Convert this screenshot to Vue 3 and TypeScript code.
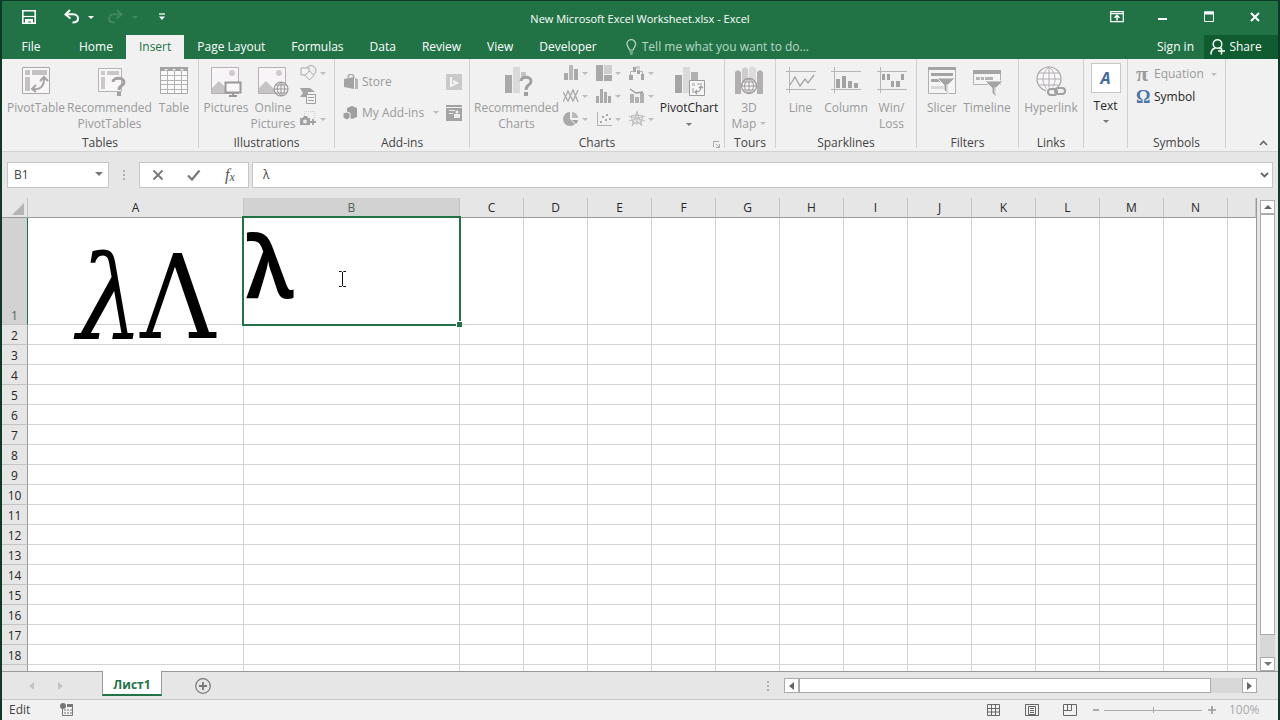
<script setup lang="ts">
import { ref } from 'vue'

const tabs = ['Home', 'Insert', 'Page Layout', 'Formulas', 'Data', 'Review', 'View', 'Developer']
const activeTab = ref('Insert')
const columns = ['A', 'B', 'C', 'D', 'E', 'F', 'G', 'H', 'I', 'J', 'K', 'L', 'M', 'N', '']
const rows = Array.from({ length: 19 }, (_, i) => i + 1)
const cellName = ref('B1')
const cellValue = ref('λ')
const search = ref('')
const zoom = ref(100)
</script>

<template>
  <div class="window">
    <header class="titlebar">
      <div class="quick">
        <button class="save" aria-label="Save">
          <svg width="14" height="14" viewBox="0 0 14 14"><path d="M.8.8h12.400v12.400H.8z" fill="none" stroke="#fff" stroke-width="1.600" /><path d="M1 6.500h12" stroke="#fff" stroke-width="1.200" /><path d="M3 9h8v5H9v-2.500H6V14H3z" fill="#fff" /></svg>
        </button>
        <button class="undo" aria-label="Undo">
          <svg width="24" height="16" viewBox="0 0 24 16"><path d="M6 1L1.500 5.500L6.500 9.500M2 5.300H9C13 5.300 14 8 14 9.500C14 12 12 13.500 8.500 13.500" fill="none" stroke="#fff" stroke-width="2" /></svg>
          <i class="caret"></i>
        </button>
        <button class="redo" aria-label="Redo" disabled>
          <svg width="24" height="16" viewBox="0 0 24 16"><path d="M9 1L13.500 5.500L8.500 9.500M13 5.300H6C2 5.300 1 8 1 9.500C1 12 3 13.500 6.500 13.500" fill="none" stroke="#3f885d" stroke-width="2" /></svg>
          <i class="caret"></i>
        </button>
        <button class="customize" aria-label="Customize Quick Access Toolbar">
          <svg width="8" height="8" viewBox="0 0 8 8"><path d="M1 1h6" stroke="#fff" stroke-width="1.300" /><path d="M1 3.500h6L4 7z" fill="#fff" /></svg>
        </button>
      </div>
      <h1>New Microsoft Excel Worksheet.xlsx - Excel</h1>
      <div class="controls">
        <button aria-label="Ribbon display options"><svg width="14" height="12" viewBox="0 0 14 12"><path d="M.7.7h12.600v10H.7zM.7 2.700h12.600" fill="none" stroke="#fff" stroke-width="1.200" /><path d="M7 9.500V4.500M4.500 6.800L7 4.300l2.500 2.500" fill="none" stroke="#fff" stroke-width="1.500" /></svg></button>
        <button aria-label="Minimize"><svg width="10" height="12" viewBox="0 0 10 12"><path d="M0 8h9" stroke="#fff" stroke-width="2" /></svg></button>
        <button aria-label="Maximize"><svg width="10" height="12" viewBox="0 0 10 12"><path d="M.5 1h9v9.500h-9z" fill="none" stroke="#fff" /><path d="M0 2h10" stroke="#fff" stroke-width="3" /></svg></button>
        <button aria-label="Close"><svg width="10" height="12" viewBox="0 0 10 12"><path d="M1 2l8 8M9 2l-8 8" stroke="#fff" stroke-width="2" /></svg></button>
      </div>
    </header>

    <nav class="tabs">
      <button class="file">File</button>
      <button v-for="t in tabs" :key="t" :class="{ active: t === activeTab }" @click="activeTab = t">{{ t }}</button>
      <label class="tell">
        <svg width="11" height="16" viewBox="0 0 11 16"><path d="M3.500 11C3.500 9 1 8 1 5a4.300 4.300 0 0 1 8.600 0C9.600 8 7.200 9 7.200 11zM3.500 13h3.700M4 15h2.700" fill="none" stroke="#b9d7c5" stroke-width="1.200" /></svg>
        <input v-model="search" placeholder="Tell me what you want to do..." aria-label="Tell me what you want to do" />
      </label>
      <button class="signin">Sign in</button>
      <button class="share">
        <svg width="16" height="18" viewBox="0 0 16 18"><circle cx="7.500" cy="6" r="4.300" fill="none" stroke="#fff" stroke-width="1.500" /><path d="M1 16.500C1 13 3 10.500 5.500 10M9 10l1.500 1M11.500 9.500v7M8 13h7" fill="none" stroke="#fff" stroke-width="1.500" /></svg>
        Share
      </button>
    </nav>

    <section class="ribbon">
      <div class="group g-tables">
        <div class="body">
          <button class="big w60" disabled>
            <svg width="32" height="32" viewBox="0 0 32 32"><path d="M2.500 2.500h27v26h-27z" fill="#f8f6f7" stroke="#aaa7a9" /><path d="M5 5h5v5H5zM12 5h15v5H12zM5 12h5v14H5z" fill="#c3c1c2" /><path d="M13 24C21 25 24 21 24 13" fill="none" stroke="#a5a3a4" stroke-width="2" /><path d="M16 20l-4 4 4 3M20 16l4-4 4 4" fill="none" stroke="#a5a3a4" stroke-width="2" /></svg>
            <span>PivotTable</span>
          </button>
          <button class="big w87" disabled>
            <svg width="32" height="32" viewBox="0 0 32 32"><path d="M4.500 3.500h23v23h-23z" fill="#f8f6f7" stroke="#b5b2b4" /><path d="M7 6h4v4H7zM13 6h12v4H13zM7 12h4v12H7z" fill="#cac8c9" /><path d="M19 17C19 12 30 12 30 17C30 21 25 20 25 25" fill="none" stroke="#a3a1a2" stroke-width="3" /><path d="M23 27h4v4h-4z" fill="#a3a1a2" /></svg>
            <span>Recommended<br />PivotTables</span>
          </button>
          <button class="big w42" disabled>
            <svg width="32" height="32" viewBox="0 0 32 32"><path d="M2.500 3.500h27v25h-27z" fill="#faf9fa" stroke="#aaa7a9" /><path d="M2 2h28v4H2z" fill="#a5a2a4" /><path d="M6 4h4l-2 2zM14 4h4l-2 2zM22 4h4l-2 2z" fill="#eee" /><path d="M3 10.500h26M3 15.500h26M3 19.500h26M3 24.500h26M9.500 6v22M16.500 6v22M23.500 6v22" stroke="#b5b2b4" /></svg>
            <span>Table</span>
          </button>
        </div>
        <footer>Tables</footer>
      </div>

      <div class="group g-illus">
        <div class="body">
          <button class="big w46" disabled>
            <svg width="32" height="32" viewBox="0 0 32 32"><path d="M1.500 2.500h27v26h-27z" fill="#f8f4f7" stroke="#b5b1b4" /><circle cx="22" cy="8" r="3" fill="#cfcbce" /><path d="M2 28v-5l7-7 8 8v4z" fill="#c7c4c6" /><path d="M15.500 17.500h15v10h-15z" fill="#f8f6f7" stroke="#9b989a" stroke-width="2" /><path d="M23 28v3M19 31h8" stroke="#9b989a" stroke-width="2" /></svg>
            <span>Pictures</span>
          </button>
          <button class="big w50" disabled>
            <svg width="32" height="32" viewBox="0 0 32 32"><path d="M1.500 2.500h27v26h-27z" fill="#f8f4f7" stroke="#b5b1b4" /><circle cx="22" cy="8" r="3" fill="#cfcbce" /><path d="M2 28v-5l7-7 8 8v4z" fill="#c7c4c6" /><circle cx="24" cy="24" r="7" fill="#f2f0f1" stroke="#9b989a" stroke-width="1.200" /><path d="M17 24h14M24 17v14M18.500 20h11M18.500 28h11M24 17c-5 4-5 10 0 14c5-4 5-10 0-14" fill="none" stroke="#9b989a" /></svg>
            <span>Online<br />Pictures</span>
          </button>
          <div class="stack">
            <button aria-label="Shapes" disabled><svg width="17" height="16" viewBox="0 0 17 16"><circle cx="11" cy="5.500" r="5" fill="#eee" stroke="#a9a7a8" /><path d="M1 3h8v7H1z" fill="#f4f2f3" stroke="#a9a7a8" /><path d="M9.500 6l4.500 4.500L9.500 15 5 10.500z" fill="#f4f2f3" stroke="#a9a7a8" /></svg><i class="caret"></i></button>
            <button aria-label="SmartArt" disabled><svg width="17" height="16" viewBox="0 0 17 16"><path d="M0 0h10l5 4H8v5H0l3-4z" fill="#a5a3a4" /><path d="M6.500 6.500h9v9h-9z" fill="#f6f5f6" stroke="#9f9d9e" /><path d="M8 9.500h6M8 12.500h6" stroke="#9f9d9e" /></svg></button>
            <button aria-label="Screenshot" disabled><svg width="17" height="16" viewBox="0 0 17 16"><path d="M4.500 5V.5h10V8" fill="none" stroke="#ccc" stroke-dasharray="1 1" /><path d="M0 7h2.500L4 5h3l1 2h2v7H0z" fill="#a3a1a2" /><circle cx="5" cy="10.500" r="2" fill="#ededed" /><path d="M13 8v6M10 11h6" stroke="#a3a1a2" stroke-width="1.800" /></svg><i class="caret"></i></button>
          </div>
        </div>
        <footer>Illustrations</footer>
      </div>

      <div class="group g-addins">
        <div class="body addins">
          <button disabled><svg width="16" height="16" viewBox="0 0 16 16"><path d="M5 4C5-1 11-1 11 4" fill="none" stroke="#aaa" stroke-width="1.500" /><path d="M1 5l10-2v12L1 13z" fill="#a3a3a3" /><path d="M12 4l3 1v10h-3z" fill="#b5b5b5" /></svg>Store</button>
          <button aria-label="Bing Maps" disabled><svg width="16" height="16" viewBox="0 0 16 16"><path d="M0 0h16v16H0z" fill="#c9c9c9" /><path d="M5 3v9l6-3-4-2" fill="none" stroke="#f4f4f4" stroke-width="2" /></svg></button>
          <button disabled><svg width="16" height="16" viewBox="0 0 16 16"><path d="M4 3l5-2 5 2v9l-5 2-5-3z" fill="#9f9f9f" /><path d="M0 8l4-1 3 1v5l-3 2-4-2z" fill="#9f9f9f" stroke="#f1f1f1" /></svg>My Add-ins<i class="caret"></i></button>
          <button aria-label="People Graph" disabled><svg width="16" height="16" viewBox="0 0 16 16"><path d="M0 0h16v16H0z" fill="#a3a3a3" /><path d="M0 2.500h16M3 5.500h6M3 8.500h4" stroke="#eee" /><circle cx="11" cy="7" r="1.500" fill="#eee" /><path d="M8 9h6v4H8z" fill="#eee" /></svg></button>
        </div>
        <footer>Add-ins</footer>
      </div>

      <div class="group g-charts">
        <div class="body">
          <button class="big w87" disabled>
            <svg width="32" height="32" viewBox="0 0 32 32"><path d="M4 10h7v18H4z" fill="#a9a9a9" /><path d="M12 2h7v26h-7z" fill="#dadada" /><path d="M20 7h5v5h-5z" fill="#c4c4c4" /><path d="M20 16C20 11 30 11 30 16C30 21 25 19 25 25" fill="none" stroke="#a0a0a0" stroke-width="3" /><path d="M23 27h4v4h-4z" fill="#a0a0a0" /></svg>
            <span>Recommended<br />Charts</span>
          </button>
          <div class="chartgrid">
            <button aria-label="Column chart" disabled><svg width="16" height="16" viewBox="0 0 16 16"><path d="M1 8h4v7H1zM11 4h4v11h-4z" fill="#a9a9a9" /><path d="M6 0h4v15H6z" fill="#b9b9b9" /></svg><i class="caret"></i></button>
            <button aria-label="Hierarchy chart" disabled><svg width="16" height="16" viewBox="0 0 16 16"><path d="M0 0h7v16H0zM8 10h8v6H8z" fill="#a9a9a9" /><path d="M8 0h8v9H8z" fill="#cfcfcf" /></svg><i class="caret"></i></button>
            <button aria-label="Waterfall chart" disabled><svg width="16" height="16" viewBox="0 0 16 16"><path d="M0 10h4v5H0zM4 2h3v5H4zM8 5h3v4H8zM12 9h3v6h-3z" fill="#a5a5a5" /><path d="M7 1h4v3H7z" fill="#cfcfcf" /><path d="M1.500 10V6.500H5M10 6.500h3.500V9" fill="none" stroke="#b1b1b1" /></svg><i class="caret"></i></button>
            <button aria-label="Line chart" disabled><svg width="16" height="16" viewBox="0 0 16 16"><path d="M0 14L5 3l5 10 5-11M0 4l5 9 5-11 5 12" fill="none" stroke="#a9a9a9" stroke-width="1.300" /></svg><i class="caret"></i></button>
            <button aria-label="Statistic chart" disabled><svg width="16" height="16" viewBox="0 0 16 16"><path d="M0 8h3v7H0zM4 1h3v14H4zM8 4h3v11H8zM12 8h3v7h-3z" fill="#a9a9a9" /></svg><i class="caret"></i></button>
            <button aria-label="Combo chart" disabled><svg width="16" height="16" viewBox="0 0 16 16"><path d="M1 6h4v9H1zM6 9h4v6H6zM11 5h4v10h-4z" fill="#b1b1b1" /><path d="M1 1l6 4 7-1" fill="none" stroke="#999" stroke-width="1.300" /></svg><i class="caret"></i></button>
            <button aria-label="Pie chart" disabled><svg width="16" height="16" viewBox="0 0 16 16"><path d="M7 1a7 7 0 1 0 5 12L7 8z" fill="#a9a9a9" /><path d="M9 1a6 6 0 0 1 6 6H9z" fill="#b9b9b9" /><path d="M9 9h6a6 6 0 0 1-2 4z" fill="#a1a1a1" /></svg><i class="caret"></i></button>
            <button aria-label="Scatter chart" disabled><svg width="16" height="16" viewBox="0 0 16 16"><path d="M1.500 1v13.500H16" fill="none" stroke="#b1b1b1" /><path d="M4 10h2v2H4zM6 5h2v2H6zM9 8h2v2H9zM10 3h2v2h-2zM13 7h2v2h-2z" fill="#a9a9a9" /></svg><i class="caret"></i></button>
            <button aria-label="Radar chart" disabled><svg width="16" height="16" viewBox="0 0 16 16"><path d="M8 0v14M0 5l16 5M16 5L0 10M3 15L8 1l5 14L8 10zM2 5l6-1 6 1-2 7H4z" fill="none" stroke="#bdbdbd" /></svg><i class="caret"></i></button>
          </div>
          <button class="big w64 on">
            <svg width="32" height="32" viewBox="0 0 32 32"><path d="M2 10h7v18H2z" fill="#a5a5a5" /><path d="M10 2h7v26h-7z" fill="#dadada" /><path d="M18 7h7v8h-7z" fill="#b1b1b1" /><path d="M16.500 15.500h15v15h-15z" fill="#f5f5f5" stroke="#9b9b9b" /><path d="M19 18h3v3h-3zM24 18h5v2h-5zM19 23h2v5h-2z" fill="#c9c9c9" /><path d="M22 27c4 0 6-1 6-6M24 25l-2 2 2 2M26 23l2-2 2 2" fill="none" stroke="#9b9b9b" stroke-width="1.200" /></svg>
            <span>PivotChart</span><i class="caret"></i>
          </button>
        </div>
        <footer>Charts<button class="launcher" aria-label="Chart options"><svg width="7" height="7" viewBox="0 0 7 7"><path d="M.5 6V.5H6M3 3l3.500 3.500M6.500 3v3.500H3" fill="none" stroke="#aaa" /></svg></button></footer>
      </div>

      <div class="group g-tours">
        <div class="body">
          <button class="big w50" disabled>
            <svg width="32" height="32" viewBox="0 0 32 32"><path d="M2 7l3-2 3 2v22H2zM24 7l3-2 3 2v22h-6z" fill="#b1afb0" /><path d="M9 4l3-2 3 2v22H9z" fill="#cecccd" /><path d="M16 3l3-2 4 2v22h-7z" fill="#dddbdc" /><circle cx="16" cy="21" r="7.500" fill="#f4f2f3" stroke="#9f9d9e" stroke-width="1.300" /><path d="M8 21h16M16 13v16M10 17h12M10 25h12M16 13.500c-6 4-6 11 0 15c6-4 6-11 0-15" fill="none" stroke="#9f9d9e" /></svg>
            <span>3D<br />Map <i class="caret"></i></span>
          </button>
        </div>
        <footer>Tours</footer>
      </div>

      <div class="group g-spark">
        <div class="body">
          <button class="big w40" disabled>
            <svg width="32" height="32" viewBox="0 0 32 32"><path d="M1 6.500h30M1 24.500h30M4.500 2v26" stroke="#b5b5b5" /><path d="M5 20l5-8 5 9 5-7 3 4 6-8" fill="none" stroke="#a3a3a3" stroke-width="1.300" /></svg>
            <span>Line</span>
          </button>
          <button class="big w50" disabled>
            <svg width="32" height="32" viewBox="0 0 32 32"><path d="M1 6.500h30M1 24.500h30M4.500 2v26" stroke="#b5b5b5" /><path d="M6 14h4v9H6zM12 11h4v12h-4zM18 16h4v7h-4zM24 18h4v5h-4z" fill="#a3a3a3" /></svg>
            <span>Column</span>
          </button>
          <button class="big w40" disabled>
            <svg width="32" height="32" viewBox="0 0 32 32"><path d="M1 6.500h30M1 24.500h30M4.500 2v26" stroke="#b5b5b5" /><path d="M6 9h3v6H6zM11 9h3v6h-3zM15 16h3v6h-3zM20 16h4v6h-4zM25 9h3v6h-3z" fill="#a3a3a3" /></svg>
            <span>Win/<br />Loss</span>
          </button>
        </div>
        <footer>Sparklines</footer>
      </div>

      <div class="group g-filters">
        <div class="body">
          <button class="big w42" disabled>
            <svg width="32" height="32" viewBox="0 0 32 32"><path d="M2.500 2.500h27v26h-27z" fill="#f6f5f6" stroke="#b1afb0" /><path d="M2 2h28v3H2zM5 8h22v3H5zM5 14h12v3H5z" fill="#a5a3a4" /><path d="M5 21h13v3H5z" fill="#d9d7d8" /><path d="M11 13h18l-7 7v9l-4-4v-5z" fill="#a5a3a4" stroke="#f3f3f3" /><path d="M21 19v8" stroke="#eee" /></svg>
            <span>Slicer</span>
          </button>
          <button class="big w50" disabled>
            <svg width="32" height="32" viewBox="0 0 32 32"><path d="M2.500 5.500h27v14h-27z" fill="#f6f5f6" stroke="#b1afb0" /><path d="M2 5h28v4H2z" fill="#a5a3a4" /><path d="M5 12h4v3H5zM10 12h3v3h-3zM14 12h8v3h-8z" fill="#b5b3b4" /><path d="M14 16h18l-7 7v9l-4-4v-5z" fill="#a5a3a4" stroke="#f3f3f3" /><path d="M24 22v7" stroke="#eee" /></svg>
            <span>Timeline</span>
          </button>
        </div>
        <footer>Filters</footer>
      </div>

      <div class="group g-links">
        <div class="body">
          <button class="big w62" disabled>
            <svg width="32" height="32" viewBox="0 0 32 32"><circle cx="14" cy="14" r="12" fill="#f8f6f8" stroke="#aaa7a9" stroke-width="1.200" /><path d="M2 14h24M14 2v24M4 8h20M4 20h20M14 2c-8 6-8 18 0 24c8-6 8-18 0-24" fill="none" stroke="#b1aeb0" /><rect x="13" y="24" width="17" height="6" rx="3" fill="#f1f1f1" stroke="#f1f1f1" stroke-width="4" /><rect x="13" y="24" width="9" height="6" rx="3" fill="none" stroke="#a19fa0" stroke-width="2" /><rect x="20" y="23" width="10" height="6" rx="3" fill="none" stroke="#a19fa0" stroke-width="2" /></svg>
            <span>Hyperlink</span>
          </button>
        </div>
        <footer>Links</footer>
      </div>

      <div class="group g-text">
        <div class="body">
          <button class="textbtn"><b>A</b><span>Text</span><i class="caret"></i></button>
        </div>
      </div>

      <div class="group g-symbols">
        <div class="body symbols">
          <button disabled><span class="sym">π</span>Equation<i class="caret"></i></button>
          <button class="on"><span class="sym">Ω</span>Symbol</button>
        </div>
        <footer>Symbols</footer>
      </div>
      <button class="collapse" aria-label="Collapse the ribbon"><svg width="9" height="6" viewBox="0 0 9 6"><path d="M1 5l3.500-3.500L8 5" fill="none" stroke="#666" stroke-width="1.600" /></svg></button>
    </section>

    <section class="formula">
      <div class="namebox"><input v-model="cellName" aria-label="Name box" /><button aria-label="Open names"><i class="caret"></i></button></div>
      <svg class="grip" width="4" height="12" viewBox="0 0 4 12"><path d="M1 1h2v2H1zM1 5h2v2H1zM1 9h2v2H1z" fill="#b0b0b0" /></svg>
      <div class="fx">
        <button aria-label="Cancel"><svg width="12" height="12" viewBox="0 0 12 12"><path d="M1.500 1.500l9 9M10.500 1.500l-9 9" stroke="#777" stroke-width="1.800" /></svg></button>
        <button aria-label="Enter"><svg width="14" height="12" viewBox="0 0 14 12"><path d="M1 6.500l4 4L12.500 1.500" fill="none" stroke="#777" stroke-width="2.200" /></svg></button>
        <button class="fn" aria-label="Insert function">f<small>x</small></button>
      </div>
      <div class="bar"><input v-model="cellValue" aria-label="Formula bar" /><button aria-label="Expand formula bar"><svg width="9" height="6" viewBox="0 0 9 6"><path d="M1 1l3.500 3.500L8 1" fill="none" stroke="#666" stroke-width="1.800" /></svg></button></div>
    </section>

    <main class="sheet">
      <div class="gridwrap">
        <table>
          <colgroup><col class="c-row" /><col class="c-wide" /><col class="c-wide" /><col v-for="n in 12" :key="n" class="c-std" /><col /></colgroup>
          <thead>
            <tr>
              <th class="corner"><svg width="13" height="13" viewBox="0 0 13 13"><path d="M12 0v12H0z" fill="#b4b4b4" /></svg></th>
              <th v-for="(c, i) in columns" :key="i" :class="{ sel: c === 'B' }">{{ c }}</th>
            </tr>
          </thead>
          <tbody>
            <tr v-for="r in rows" :key="r" :class="{ tall: r === 1 }">
              <th :class="{ sel: r === 1 }">{{ r < rows.length ? r : '' }}</th>
              <td v-for="(c, i) in columns" :key="i">
                <div v-if="r === 1 && c === 'A'" class="art"><em>λ</em><span>Λ</span></div>
                <div v-if="r === 1 && c === 'B'" class="selection">
                  <input v-model="cellValue" aria-label="Cell B1" />
                  <svg class="pointer" width="9" height="18" viewBox="0 0 9 18"><path d="M1 1.500h2.500l1 1 1-1H8M1 16.500h2.500l1-1 1 1H8M4.500 2v14" fill="none" stroke="#111" /></svg>
                  <i class="handle"></i>
                </div>
              </td>
            </tr>
          </tbody>
        </table>
      </div>
      <div class="vscroll">
        <button aria-label="Scroll up"><i class="caret up"></i></button>
        <div class="vthumb"></div>
        <div class="vtrack"></div>
        <button aria-label="Scroll down"><i class="caret"></i></button>
      </div>
    </main>

    <section class="sheets">
      <div class="arrows"><button aria-label="Previous sheet" disabled><i class="tri left"></i></button><button aria-label="Next sheet" disabled><i class="tri"></i></button></div>
      <button class="sheettab">Лист1</button>
      <button class="add" aria-label="New sheet"><svg width="16" height="16" viewBox="0 0 16 16"><circle cx="8" cy="8" r="7.300" fill="none" stroke="#777" stroke-width="1.200" /><path d="M8 4v8M4 8h8" stroke="#777" stroke-width="1.800" /></svg></button>
      <svg class="grip" width="4" height="12" viewBox="0 0 4 12"><path d="M1 1h2v2H1zM1 5h2v2H1zM1 9h2v2H1z" fill="#b0b0b0" /></svg>
      <div class="hscroll">
        <button aria-label="Scroll left"><i class="tri left"></i></button>
        <div class="hthumb"></div>
        <div class="htrack"></div>
        <button aria-label="Scroll right"><i class="tri"></i></button>
      </div>
    </section>

    <footer class="status">
      <span class="mode">Edit</span>
      <button aria-label="Record macro"><svg width="14" height="14" viewBox="0 0 14 14"><path d="M2.500 5v7.500h10V4" fill="none" stroke="#777" /><circle cx="3" cy="3" r="3" fill="#777" /><path d="M7 1h6v3H7z" fill="#777" /><path d="M4 7h2M7 7h2M10 7h2M4 10h2M7 10h2M10 10h2" stroke="#777" /></svg></button>
      <div class="views">
        <button aria-label="Normal view"><svg width="14" height="14" viewBox="0 0 14 14"><path d="M.5 1.500h12v11H.5zM.5 5.500h12M.5 9h12M4.500 1.500v11M8.500 1.500v11" fill="none" stroke="#666" /></svg></button>
        <button aria-label="Page layout view"><svg width="14" height="14" viewBox="0 0 14 14"><path d="M.5 1.500h13v11H.5z" fill="none" stroke="#666" /><path d="M3.500 3.500h7v8h-7zM5 5.500h4M5 7.500h4M5 9.500h4" fill="none" stroke="#666" /></svg></button>
        <button aria-label="Page break view"><svg width="14" height="14" viewBox="0 0 14 14"><path d="M.5 1.500h13v11H.5zM4.500 1.500v6M.5 7.500h8M8.500 1.500v6" fill="none" stroke="#666" /></svg></button>
      </div>
      <div class="zoom">
        <button aria-label="Zoom out"><svg width="8" height="8" viewBox="0 0 8 8"><path d="M1 4h6" stroke="#aaa" stroke-width="2" /></svg></button>
        <input v-model="zoom" type="range" min="10" max="190" aria-label="Zoom" />
        <button aria-label="Zoom in"><svg width="8" height="8" viewBox="0 0 8 8"><path d="M0 4h8M4 0v8" stroke="#999" stroke-width="1.600" /></svg></button>
        <span>{{ zoom }}%</span>
      </div>
    </footer>
  </div>
</template>

<style>
html, body { margin: 0; background: #e6e6e6; }
</style>

<style scoped>
* { box-sizing: border-box; }
.window { height: 100vh; display: flex; flex-direction: column; overflow: hidden; border: solid #0c3b25; border-width: 1px 2px 0; background: #e6e6e6; color: #444; font: 12px/16px "Open Sans", "Noto Sans", sans-serif; }
button, input { font: inherit; color: inherit; background: none; border: 0; padding: 0; margin: 0; border-radius: 0; min-width: 0; outline: 0; }
button { display: flex; align-items: center; justify-content: center; white-space: nowrap; }
svg { display: block; flex: none; }
.caret { display: inline-block; flex: none; border: solid transparent; border-width: 3px 3px 0; border-top-color: #777; }
.caret.up { border-width: 0 4px 4px; border-bottom-color: #666; }
:disabled .caret { border-top-color: #bcbcbc; }

.titlebar { flex: none; height: 34px; background: #217346; color: #fff; display: grid; grid-template-columns: 1fr auto 1fr; align-items: center; padding-bottom: 2px; }
.titlebar h1 { margin: 0; padding-top: 4px; font-size: 11px; font-weight: 400; }
.titlebar .caret { border-top-color: #fff; }
.quick { display: flex; align-items: center; padding-left: 20px; }
.undo { margin-left: 28px; }
.redo { margin-left: 14px; }
.quick .redo .caret { border-top-color: #3f885d; }
.customize { margin-left: 20px; }
.controls { display: flex; justify-content: flex-end; }
.controls button { width: 46px; height: 30px; }

.tabs { flex: none; height: 24px; background: #217346; color: #fff; display: flex; }
.tabs > button { padding: 0 13px; }
.tabs .file { width: 58px; margin-right: 6px; }
.tabs .active { background: #f1f1f1; color: #217346; }
.tell { display: flex; align-items: center; flex: 1; gap: 5px; margin-left: 16px; color: #b9d7c5; }
.tell input { width: 200px; }
.tell input::placeholder { color: #b9d7c5; opacity: 1; }
.tabs .signin { padding: 0 10px; }
.tabs .share { width: 74px; background: #0e5c2f; gap: 3px; padding: 0 10px 0 0; }

.ribbon { flex: none; height: 93px; display: flex; background: #f1f1f1; border-bottom: 1px solid #d2d2d2; }
.group { display: flex; flex-direction: column; position: relative; flex: none; padding-top: 4px; border-right: 1px solid #d0d0d0; margin-bottom: 3px; }
.body { display: flex; flex: 1; padding-left: 3px; }
.group footer { display: flex; justify-content: center; line-height: 16px; height: 13px; color: #444; }
.g-tables { width: 197px; } .g-illus { width: 136px; } .g-addins { width: 135px; } .g-charts { width: 255px; }
.g-tours { width: 51px; } .g-spark { width: 141px; } .g-filters { width: 102px; } .g-links { width: 65px; }
.g-text { width: 44px; } .g-symbols { width: 98px; }
.g-tours .body, .g-links .body, .g-text .body { padding-left: 0; }
.g-tables .body, .g-illus .body, .g-filters .body { padding-left: 4px; }
.big { flex-direction: column; justify-content: flex-start; padding-top: 2px; color: #9a9a9a; gap: 3px; }
.big .caret { margin-top: 4px; }
.big span .caret { margin: 0 0 3px 1px; }
.on { color: #262626; }
.w40 { width: 43px; } .w42 { width: 42px; } .w46 { width: 46px; } .w50 { width: 48px; } .w60 { width: 60px; } .w62 { width: 64px; } .w64 { width: 64px; } .w87 { width: 87px; }
.stack { display: grid; grid-template-rows: repeat(3, 23px); align-content: start; padding-left: 3px; }
.stack button, .chartgrid button { justify-content: flex-start; gap: 3px; height: 20px; }
.body.addins { display: grid; grid-template-columns: 103px 16px; grid-template-rows: 31px 31px; padding: 3px 0 0 8px; align-items: center; }
.addins button { color: #9a9a9a; justify-content: flex-start; gap: 3px; }
.addins .caret { margin-left: 6px; }
.chartgrid { display: grid; grid-template-columns: repeat(3, 33px); grid-template-rows: repeat(3, 23px); align-content: start; padding-left: 3px; width: 97px; }
.g-charts footer { position: relative; }
.launcher { position: absolute; right: 4px; bottom: 0; }
.textbtn { flex-direction: column; justify-content: flex-start; width: 43px; color: #262626; }
.textbtn b { width: 30px; height: 30px; border: 1px solid #c6c6c6; background: #fff; color: #41699f; font: italic bold 16px/28px "Open Sans", sans-serif; margin-bottom: 5px; }
.textbtn .caret { margin-top: 6px; }
.body.symbols { flex-direction: column; padding-left: 8px; gap: 1px; }
.symbols button { height: 22px; justify-content: flex-start; }
.symbols button:disabled { color: #9a9a9a; }
.symbols .caret { margin-left: 7px; }
.sym { width: 18px; text-align: left; font: bold 22px/20px "Liberation Serif", serif; }
.on .sym { color: #4a74a8; font-size: 18px; }
.collapse { margin: auto 10px 5px auto; }

.formula { flex: none; height: 46px; display: flex; padding: 10px 5px 10px 5px; color: #444; }
.namebox, .fx, .bar { display: flex; background: #fff; border: 1px solid #c6c6c6; height: 26px; }
.namebox { width: 102px; }
.namebox input { flex: 1; padding-left: 6px; }
.namebox button { width: 18px; padding-bottom: 2px; }
.namebox .caret, .vscroll .caret:not(.up) { border-width: 4px 4px 0; }
.grip { align-self: center; }
.formula .grip { margin: 0 13px; }
.fx { width: 110px; }
.fx button { width: 36px; }
.fx .fn { font: italic 16px/20px "Liberation Serif", serif; color: #555; }
.fn small { font-size: 12px; margin-top: 3px; }
.bar { flex: 1; margin-left: 3px; }
.bar input { flex: 1; padding-left: 10px; }
.bar button { width: 15px; }

.sheet { flex: 1; min-height: 0; display: flex; }
.gridwrap { flex: 1; min-width: 0; overflow: hidden; border-right: 1px solid #999; }
table { width: 100%; table-layout: fixed; border-collapse: separate; border-spacing: 0; background: #fff; }
.c-row { width: 26px; } .c-wide { width: 216px; } .c-std { width: 64px; }
th { font-weight: 400; color: #262626; background: #e6e6e6; padding: 0; height: 20px; line-height: 18px; border-right: 1px solid #c3c3c3; border-bottom: 1px solid #999; }
tbody th { border-right-color: #999; border-bottom-color: #c3c3c3; vertical-align: bottom; line-height: 16px; }
th.sel { background: #d2d2d2; color: #50675a; }
tbody th.sel { border-right: 1px solid #217346; }
.corner svg { margin: 3px 0 0 10px; }
td { position: relative; padding: 0; height: 20px; border-right: 1px solid #d4d4d4; border-bottom: 1px solid #d4d4d4; }
td:last-child { border-right: 0; }
.tall th, .tall td { height: 107px; }
.art { position: absolute; z-index: 1; left: 49px; top: 12px; display: grid; grid-template-columns: 63px auto; color: #000; font: 116px/136px "DejaVu Serif Condensed", "DejaVu Serif", serif; }
.selection { position: absolute; z-index: 2; inset: -2px; border: 2px solid #217346; background: #fff; }
.selection input { display: block; width: 100%; color: #000; font: 600 86px/94px "Noto Sans", sans-serif; height: 94px; padding-left: 2px; }
.pointer { position: absolute; left: 94px; top: 52px; }
.handle { position: absolute; right: -3px; bottom: -3px; width: 6px; height: 6px; background: #217346; border: solid #fff; border-width: 1px 0 0 1px; }

.vscroll { width: 15px; margin: 2px 3px 0 3px; display: flex; flex-direction: column; }
.vscroll button, .hscroll button { border: 1px solid #ababab; background: #fff; flex: none; }
.vscroll button { height: 14px; }
.vthumb { flex: 94; border: 1px solid #ababab; background: #fff; }
.vtrack { flex: 5; background: #d8d8d8; }

.sheets { flex: none; height: 28px; display: flex; border-top: 1px solid #999; }
.arrows { width: 100px; display: flex; padding-left: 27px; gap: 24px; }
.tri { border: solid transparent; border-width: 4px 0 4px 5px; border-left-color: #666; }
.tri.left { border-width: 4px 5px 4px 0; border-right-color: #666; }
.arrows .tri { border-left-color: #c4c4c4; } .arrows .tri.left { border-right-color: #c4c4c4; }
.sheettab { width: 60px; height: 25px; margin-top: -1px; padding-top: 4px; background: #fff; color: #217346; font-weight: 700; border: 1px solid #999; border-top: 0; border-bottom: 2px solid #217346; }
.add { margin-left: 33px; }
.sheets .grip { margin-left: auto; }
.hscroll { width: 473px; height: 15px; margin: 6px 21px 0 14px; display: flex; }
.hscroll button { width: 15px; }
.hthumb { flex: 13; border: 1px solid #ababab; background: #fff; }
.htrack { flex: 1; background: #d8d8d8; }

.status { flex: none; height: 21px; display: flex; align-items: center; border-top: 1px solid #c6c6c6; background: #f1f1f1; padding: 0 17px 0 7px; }
.mode { width: 51px; }
.views { margin-left: auto; display: flex; gap: 24px; }
.zoom { display: flex; align-items: center; margin-left: 15px; color: #aaa; }
.zoom input { appearance: none; width: 98px; height: 8px; margin: 0 6px 0 4px; background: linear-gradient(#aaa, #aaa) center / 100% 1px no-repeat; }
.zoom input::-webkit-slider-thumb { appearance: none; width: 1px; height: 6px; background: #aaa; }
.zoom span { margin-left: 13px; width: 32px; }
</style>
